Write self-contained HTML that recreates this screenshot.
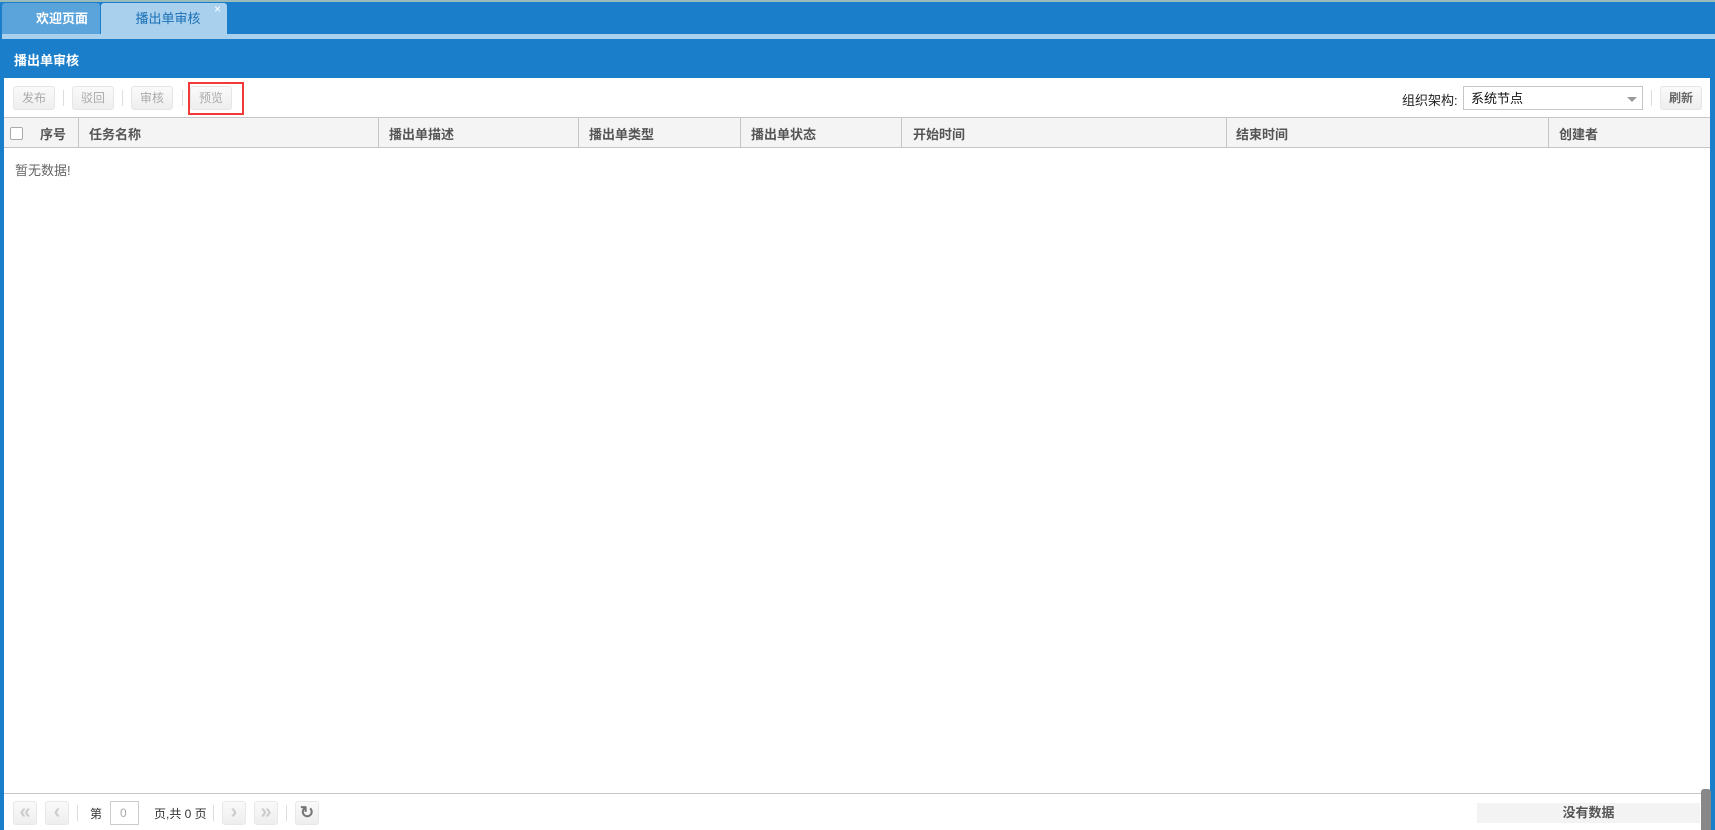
<!DOCTYPE html>
<html><head><meta charset="utf-8"><style>
*{box-sizing:border-box;margin:0;padding:0}
body{width:1715px;height:830px;overflow:hidden;background:#1a7ecb;font-family:"Liberation Sans","Noto Sans CJK SC",sans-serif;font-size:13px;color:#333;position:relative}
.abs{position:absolute}
.topline{left:0;top:0;width:1715px;height:2px;background:#9bb}
.tab{top:3px;height:32px;line-height:32px;text-align:center;font-weight:bold;font-size:13px;border-radius:3px 3px 0 0}
.stripe{left:2px;top:34px;width:1713px;height:5px;background:#a9d1ee}
.title{left:14px;top:50px;color:#fff;font-weight:bold;font-size:13px}
.panel{left:4px;top:78px;width:1706px;height:752px;background:#fff}
.btn{top:86px;height:24px;width:42px;border:1px solid #e6e6e6;border-radius:3px;background:linear-gradient(#fafafa,#eee);color:#aaa;text-align:center;line-height:22px;font-size:12px}
.sep{width:1px;height:16px;background:#ddd}
.hdr{left:4px;top:117px;width:1706px;height:31px;background:#f4f4f4;border-top:1px solid #c6c6c6;border-bottom:1px solid #c6c6c6}
.col{top:118px;height:29px;border-left:1px solid #c6c6c6}
.ht{top:124px;font-weight:bold;color:#555;font-size:13px}
.pb{top:801px;width:24px;height:24px;border:1px solid #e8e8e8;border-radius:3px;background:linear-gradient(#fafafa,#eee);color:#ccc;text-align:center;line-height:21px;font-size:20px;font-weight:bold}
</style></head><body>
<div class="abs topline"></div>
<div class="abs tab" style="left:2px;width:98px;padding-left:22px;background:#5aa4db;color:#fff">欢迎页面</div>
<div class="abs tab" style="left:101px;width:126px;padding-left:8px;background:#a9d1ee;color:#1a6fb5;font-weight:normal">播出单审核</div>
<div class="abs" style="left:214px;top:2px;color:#fff;font-size:12px">×</div>
<div class="abs stripe"></div>
<div class="abs title">播出单审核</div>
<div class="abs panel"></div>
<div class="abs btn" style="left:13px">发布</div>
<div class="abs sep" style="left:63px;top:90px"></div>
<div class="abs btn" style="left:72px">驳回</div>
<div class="abs sep" style="left:122px;top:90px"></div>
<div class="abs btn" style="left:131px">审核</div>
<div class="abs sep" style="left:182px;top:90px"></div>
<div class="abs btn" style="left:190px">预览</div>
<div class="abs" style="left:188px;top:82px;width:56px;height:33px;border:2px solid #f03a3a"></div>
<div class="abs" style="left:1402px;top:90px;font-size:13px;color:#222">组织架构:</div>
<div class="abs" style="left:1463px;top:86px;width:180px;height:24px;border:1px solid #c6c6c6;background:#fff;padding-left:7px;line-height:24px;color:#111">系统节点</div>
<div class="abs" style="left:1627px;top:97px;width:0;height:0;border-left:5px solid transparent;border-right:5px solid transparent;border-top:5px solid #999"></div>
<div class="abs sep" style="left:1651px;top:90px"></div>
<div class="abs btn" style="left:1660px;color:#666;font-weight:bold">刷新</div>
<div class="abs hdr"></div>
<div class="abs" style="left:10px;top:127px;width:13px;height:13px;border:1px solid #aaa;border-radius:2px;background:#fff"></div>
<div class="abs ht" style="left:40px">序号</div>
<div class="abs col" style="left:78px"></div><div class="abs ht" style="left:89px">任务名称</div>
<div class="abs col" style="left:378px"></div><div class="abs ht" style="left:389px">播出单描述</div>
<div class="abs col" style="left:578px"></div><div class="abs ht" style="left:589px">播出单类型</div>
<div class="abs col" style="left:740px"></div><div class="abs ht" style="left:751px">播出单状态</div>
<div class="abs col" style="left:901px"></div><div class="abs ht" style="left:913px">开始时间</div>
<div class="abs col" style="left:1226px"></div><div class="abs ht" style="left:1236px">结束时间</div>
<div class="abs col" style="left:1548px"></div><div class="abs ht" style="left:1559px">创建者</div>
<div class="abs" style="left:15px;top:160px;color:#666">暂无数据!</div>
<div class="abs" style="left:4px;top:793px;width:1706px;height:1px;background:#c6c6c6"></div>
<div class="abs pb" style="left:13px">«</div>
<div class="abs pb" style="left:45px">‹</div>
<div class="abs sep" style="left:77px;top:805px"></div>
<div class="abs" style="left:90px;top:805px;font-size:12px">第</div>
<div class="abs" style="left:110px;top:801px;width:29px;height:24px;border:1px solid #ccc;color:#aaa;font-size:12px;padding-left:9px;line-height:22px">0</div>
<div class="abs" style="left:154px;top:805px;font-size:12px">页,共 0 页</div>
<div class="abs sep" style="left:213px;top:805px"></div>
<div class="abs pb" style="left:222px">›</div>
<div class="abs pb" style="left:254px">»</div>
<div class="abs sep" style="left:286px;top:805px"></div>
<div class="abs pb" style="left:295px;color:#777;font-size:17px">↻</div>
<div class="abs" style="left:1477px;top:803px;width:223px;height:20px;background:#f3f3f3;text-align:center;line-height:20px;font-weight:bold;color:#555">没有数据</div>
<div class="abs" style="left:1701px;top:789px;width:10px;height:41px;background:#888;border-radius:3px 3px 0 0"></div>
</body></html>
